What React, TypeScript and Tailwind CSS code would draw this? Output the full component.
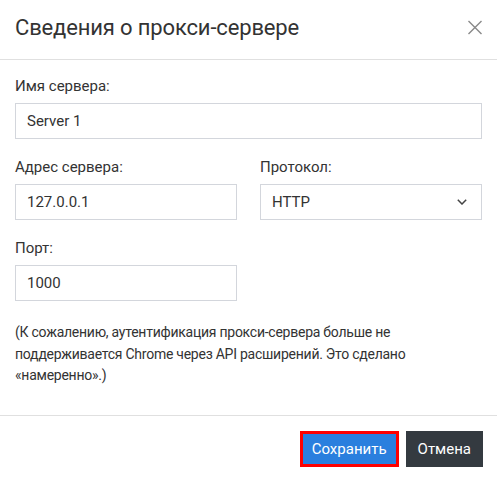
import { useState } from "react";

const PROTOCOLS = ["HTTP", "HTTPS", "SOCKS4", "SOCKS5"];

function Field({ label, children }: { label: string; children: React.ReactNode }) {
  return (
    <div className="flex flex-col">
      <label className="text-[15px] leading-[22px] text-[#333] mb-[6px]">{label}</label>
      {children}
    </div>
  );
}

const inputCls =
  "h-9 w-full border border-[#d3d6dc] bg-white px-[11px] text-[15px] text-[#333] outline-none";

export default function App() {
  const [name, setName] = useState("Server 1");
  const [host, setHost] = useState("127.0.0.1");
  const [protocol, setProtocol] = useState("HTTP");
  const [port, setPort] = useState("1000");

  return (
    <div className="w-[497px] h-[481px] bg-white font-['Roboto',sans-serif] text-[#333] flex flex-col">
      {/* Header */}
      <div className="h-[60px] shrink-0 flex items-center justify-between pl-[15px] pr-[15px] pb-[4px] border-b border-[#e0e0e0]">
        <h5 className="text-[22px] tracking-[-0.15px] leading-none text-[#333]">Сведения о прокси-сервере</h5>
        <button className="w-[14px] h-[14px] flex items-center justify-center">
          <svg width="15" height="15" viewBox="0 0 15 15">
            <path d="M0.5 0.5 L14.5 14.5 M14.5 0.5 L0.5 14.5" stroke="#8a8a8a" strokeWidth="1.6" fill="none" />
          </svg>
        </button>
      </div>

      {/* Body */}
      <div className="flex-1 flex flex-col gap-[17px] px-[15px] pt-[15px]">
        <Field label="Имя сервера:">
          <input className={inputCls} value={name} onChange={(e) => setName(e.target.value)} />
        </Field>

        <div className="grid grid-cols-2 gap-[23px]">
          <Field label="Адрес сервера:">
            <input className={inputCls} value={host} onChange={(e) => setHost(e.target.value)} />
          </Field>
          <Field label="Протокол:">
            <div className="relative">
              <select
                className={`${inputCls} appearance-none pr-8`}
                value={protocol}
                onChange={(e) => setProtocol(e.target.value)}
              >
                {PROTOCOLS.map((p) => (
                  <option key={p}>{p}</option>
                ))}
              </select>
              <svg
                className="absolute right-[15px] top-[15px] pointer-events-none"
                width="10"
                height="6"
                viewBox="0 0 10 6"
              >
                <path d="M0.8 0.8 L5 5 L9.2 0.8" stroke="#444" strokeWidth="1.5" fill="none" />
              </svg>
            </div>
          </Field>
        </div>

        <div className="grid grid-cols-2 gap-[23px]">
          <Field label="Порт:">
            <input className={inputCls} value={port} onChange={(e) => setPort(e.target.value)} />
          </Field>
        </div>

        <p className="text-[14px] tracking-[-0.25px] leading-[21.5px] text-[#333] mt-[4px]">
          (К сожалению, аутентификация прокси-сервера больше не
          <br />
          поддерживается Chrome через API расширений. Это сделано
          <br />
          «намеренно».)
        </p>
      </div>

      {/* Footer */}
      <div className="h-[66px] shrink-0 border-t border-[#e0e0e0] flex items-start justify-end gap-[7px] pt-[15px] pr-[14px]">
        <button className="h-9 px-[9px] bg-[#2a7fde] border-[3px] border-[#ff0000] text-white text-[15px]">
          Сохранить
        </button>
        <button className="h-9 px-[12px] bg-[#343a40] text-white text-[15px]">Отмена</button>
      </div>
    </div>
  );
}
